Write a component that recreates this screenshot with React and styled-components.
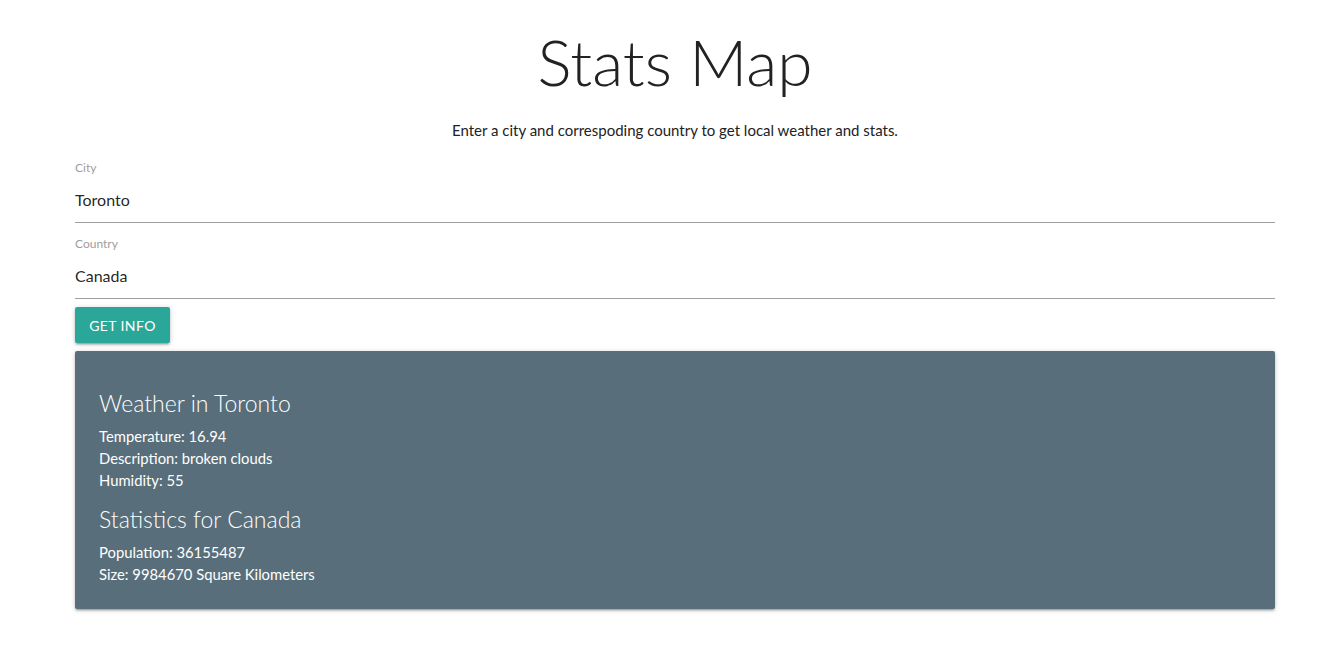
import React from "react";
import styled, { createGlobalStyle } from "styled-components";

const GlobalStyle = createGlobalStyle`
  html, body {
    margin: 0;
    padding: 0;
    background: #ffffff;
    font-family: "Lato", "Open Sans", sans-serif;
    color: rgba(0, 0, 0, 0.87);
  }
  * {
    box-sizing: border-box;
  }
`;

const Container = styled.div`
  width: 1200px;
  margin-left: 75px;
  padding-bottom: 40px;
`;

const Title = styled.h1`
  margin: 0;
  padding-top: 27px;
  height: 119px;
  font-size: 64px;
  line-height: 70px;
  font-weight: 300;
  text-align: center;
  color: #222;
`;

const Subtitle = styled.p`
  margin: 0;
  line-height: 22px;
  font-size: 15px;
  text-align: center;
  color: #222;
`;

const Field = styled.div`
  display: flex;
  flex-direction: column;
  margin-top: ${(p) => p.$top}px;
`;

const Label = styled.label`
  font-size: 12px;
  line-height: 16px;
  color: #9e9e9e;
`;

const Input = styled.input`
  margin-top: 2px;
  height: 45px;
  border: none;
  border-bottom: 1px solid #9e9e9e;
  outline: none;
  padding: 0 0 2px;
  font-family: inherit;
  font-size: 16px;
  color: rgba(0, 0, 0, 0.87);
  background: transparent;
`;

const Button = styled.button`
  margin-top: 8px;
  height: 36px;
  width: 95px;
  border: none;
  border-radius: 2px;
  background: #2ba79a;
  color: #fff;
  font-family: inherit;
  font-size: 14px;
  letter-spacing: 0.4px;
  text-transform: uppercase;
  box-shadow: 0 2px 2px 0 rgba(0, 0, 0, 0.14), 0 3px 1px -2px rgba(0, 0, 0, 0.12),
    0 1px 5px 0 rgba(0, 0, 0, 0.2);
  cursor: pointer;
`;

const Card = styled.div`
  margin-top: 8px;
  padding: 24px;
  background: #586e7a;
  color: #fff;
  border-radius: 2px;
  box-shadow: 0 2px 2px 0 rgba(0, 0, 0, 0.14), 0 3px 1px -2px rgba(0, 0, 0, 0.12),
    0 1px 5px 0 rgba(0, 0, 0, 0.2);
`;

const CardHeading = styled.h5`
  margin: 14px 0 8px;
  font-size: 23px;
  line-height: 28px;
  font-weight: 300;
`;

const Stat = styled.div`
  font-size: 14.8px;
  line-height: 22px;
`;

export default function App() {
  return (
    <>
      <GlobalStyle />
      <Container>
        <Title>Stats Map</Title>
        <Subtitle>
          Enter a city and correspoding country to get local weather and stats.
        </Subtitle>
        <Field $top={19}>
          <Label>City</Label>
          <Input defaultValue="Toronto" />
        </Field>
        <Field $top={13}>
          <Label>Country</Label>
          <Input defaultValue="Canada" />
        </Field>
        <Button>Get Info</Button>
        <Card>
          <CardHeading>Weather in Toronto</CardHeading>
          <Stat>Temperature: 16.94</Stat>
          <Stat>Description: broken clouds</Stat>
          <Stat>Humidity: 55</Stat>
          <CardHeading>Statistics for Canada</CardHeading>
          <Stat>Population: 36155487</Stat>
          <Stat>Size: 9984670 Square Kilometers</Stat>
        </Card>
      </Container>
    </>
  );
}
